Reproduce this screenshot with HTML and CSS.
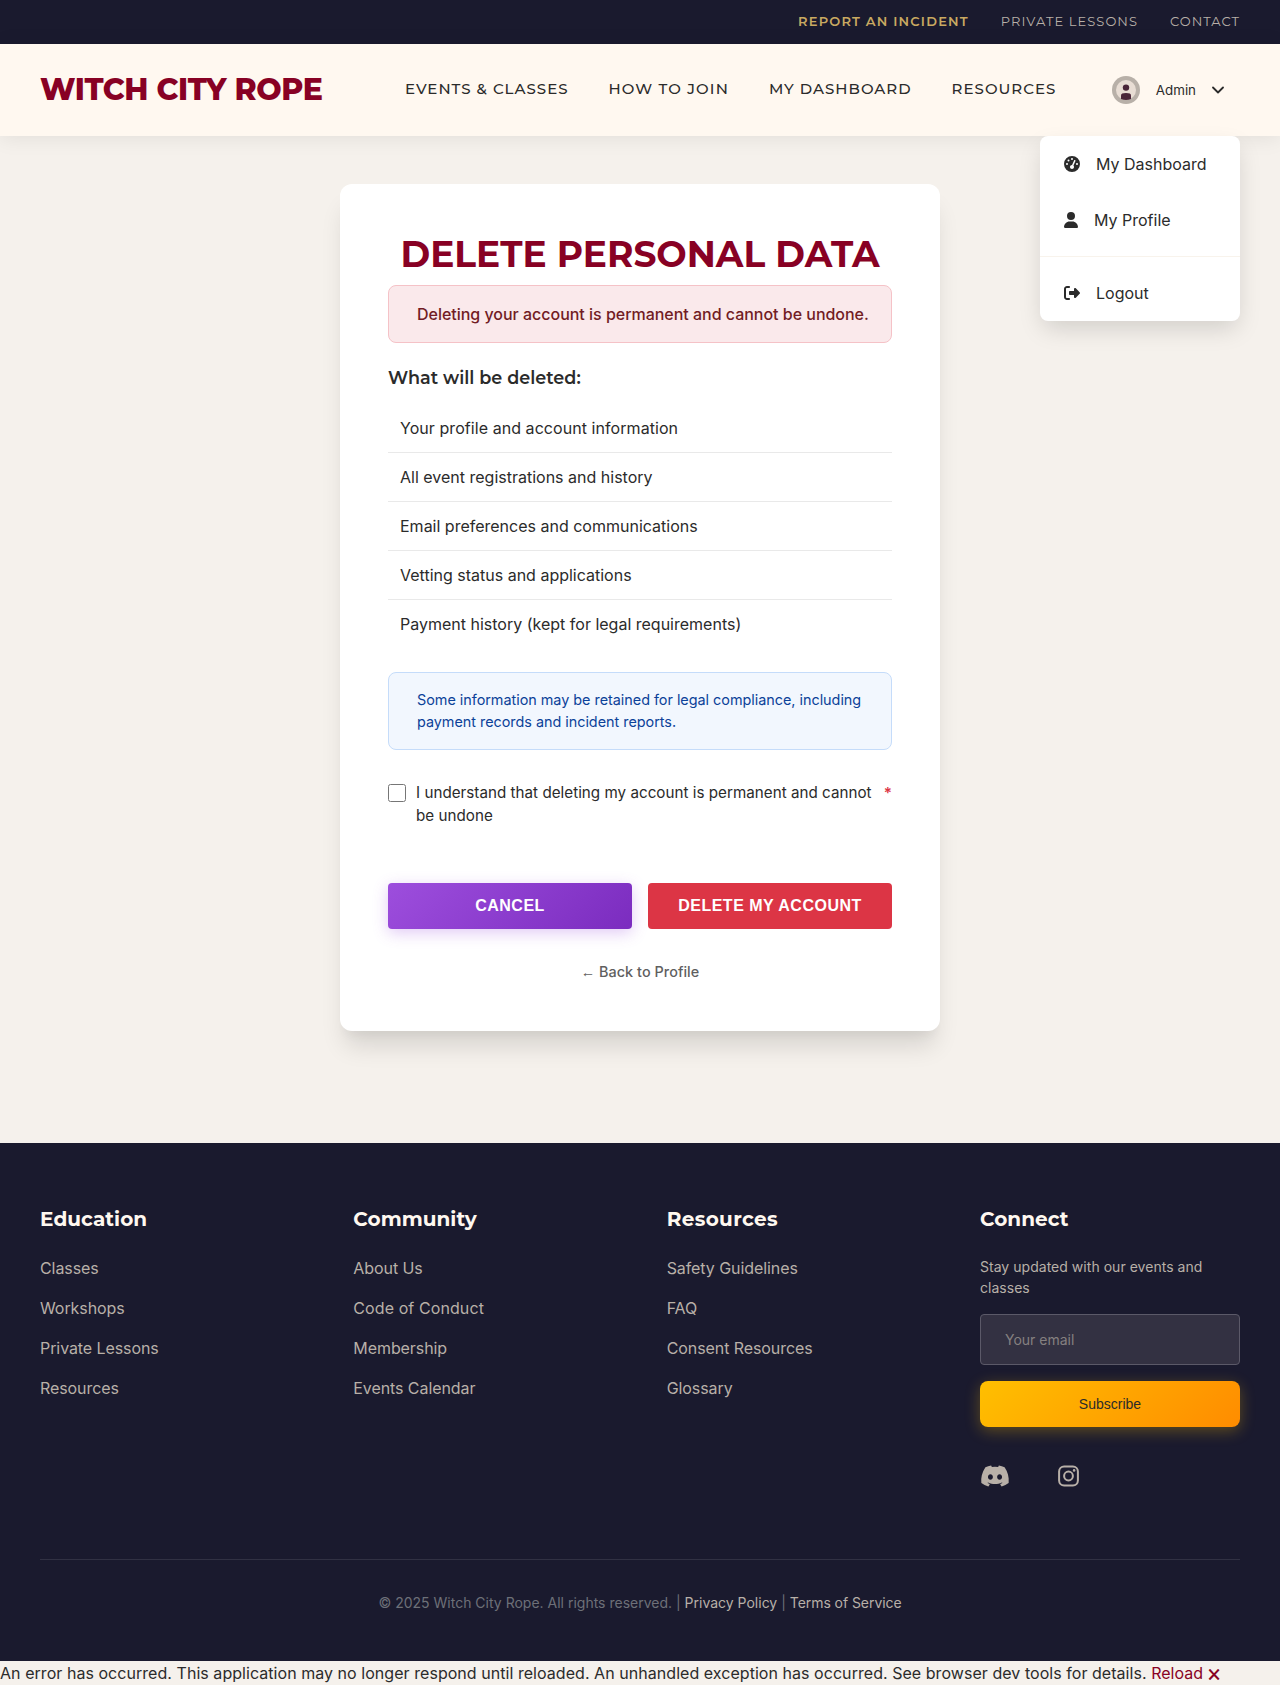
FILE: index.html
```html
<!DOCTYPE html>
<html lang="en">
<head>
<meta charset="utf-8">
<title>Delete Personal Data - Witch City Rope</title>
<link rel="stylesheet" href="styles.css">
</head>
<body>
<div class="topbar">
  <a class="incident" href="#">Report an Incident</a>
  <a class="lessons" href="#">Private Lessons</a>
  <a class="contact" href="#">Contact</a>
</div>
<header class="header">
  <a class="logo" href="#">WITCH CITY ROPE</a>
  <nav class="nav">
    <a href="#">Events &amp; Classes</a>
    <a class="join" href="#">How to Join</a>
    <a href="#">My Dashboard</a>
    <a href="#">Resources</a>
  </nav>
  <div class="user">
    <svg class="avatar" width="28" height="28" viewBox="0 0 28 28"><circle cx="14" cy="14" r="14" fill="#b8b0a8"/><circle cx="14" cy="14" r="10" fill="#e8ddd4"/><circle cx="14" cy="11.6" r="3.2" fill="#4a2639"/><path d="M9 23v-3.600q0-2.400 5-2.400t5 2.400V23q-5 2-10 0z" fill="#4a2639"/></svg>
    <span class="username">Admin</span>
    <svg width="14" height="14" viewBox="0 0 14 14" fill="none" stroke="#2b2b2b" stroke-width="1.800" stroke-linecap="round" stroke-linejoin="round"><path d="M1 4.500l5 5 5-5"/></svg>
  </div>
  <div class="menu">
    <a class="item" href="#"><svg width="16" height="16" viewBox="0 0 512 512" fill="#2b2b2b"><path d="M0 256a256 256 0 1 1 512 0A256 256 0 1 1 0 256zM288 96a32 32 0 1 0-64 0 32 32 0 1 0 64 0zM256 416c35.300 0 64-28.700 64-64 0-17.400-6.900-33.100-18.100-44.600L366 161.700c5.300-12.100-.2-26.300-12.300-31.600s-26.300.2-31.600 12.300L257.900 288H256c-35.300 0-64 28.700-64 64s28.700 64 64 64zM176 144a32 32 0 1 0-64 0 32 32 0 1 0 64 0zM96 288a32 32 0 1 0 0-64 32 32 0 1 0 0 64zm352-32a32 32 0 1 0-64 0 32 32 0 1 0 64 0z" fill-rule="evenodd"/></svg>My Dashboard</a>
    <a class="item" href="#"><svg width="14" height="16" viewBox="0 0 448 512" fill="#2b2b2b"><path d="M224 256A128 128 0 1 0 224 0a128 128 0 1 0 0 256zm-45.700 48C79.800 304 0 383.800 0 482.300 0 498.700 13.300 512 29.700 512h388.600c16.400 0 29.700-13.300 29.700-29.700C448 383.800 368.200 304 269.700 304h-91.400z"/></svg>My Profile</a>
    <a class="item logout" href="#"><svg width="16" height="16" viewBox="0 0 512 512" fill="#2b2b2b"><path d="M377.900 105.900L500.700 228.700c7.200 7.200 11.300 17.100 11.300 27.300s-4.100 20.100-11.300 27.300L377.900 406.100c-6.400 6.400-15 9.900-24 9.900-18.700 0-33.900-15.200-33.900-33.900V320H192c-17.700 0-32-14.300-32-32v-64c0-17.700 14.300-32 32-32h128v-62.100c0-18.700 15.200-33.900 33.900-33.900 9 0 17.600 3.600 24 9.900zM160 96H96c-17.700 0-32 14.300-32 32v256c0 17.700 14.300 32 32 32h64c17.700 0 32 14.300 32 32s-14.300 32-32 32H96c-53 0-96-43-96-96V128c0-53 43-96 96-96h64c17.700 0 32 14.300 32 32s-14.300 32-32 32z"/></svg>Logout</a>
  </div>
</header>
<main class="main">
  <section class="card">
    <h1>DELETE PERSONAL DATA</h1>
    <div class="alert">Deleting your account is permanent and cannot be undone.</div>
    <h2>What will be deleted:</h2>
    <ul class="list">
      <li>Your profile and account information</li>
      <li>All event registrations and history</li>
      <li>Email preferences and communications</li>
      <li>Vetting status and applications</li>
      <li>Payment history (kept for legal requirements)</li>
    </ul>
    <div class="info">Some information may be retained for legal compliance, including payment records and incident reports.</div>
    <label class="confirm"><input type="checkbox"><span class="confirm-text">I understand that deleting my account is permanent and cannot be undone</span><span class="required">*</span></label>
    <div class="actions">
      <button class="cancel">CANCEL</button>
      <button class="delete">DELETE MY ACCOUNT</button>
    </div>
    <a class="back" href="#"><span class="arrow">←</span> Back to Profile</a>
  </section>
</main>
<footer class="footer">
  <div class="columns">
    <div class="column"><h3>Education</h3><a href="#">Classes</a><a href="#">Workshops</a><a href="#">Private Lessons</a><a href="#">Resources</a></div>
    <div class="column"><h3>Community</h3><a href="#">About Us</a><a class="conduct" href="#">Code of Conduct</a><a href="#">Membership</a><a href="#">Events Calendar</a></div>
    <div class="column"><h3 class="wide">Resources</h3><a href="#">Safety Guidelines</a><a href="#">FAQ</a><a href="#">Consent Resources</a><a href="#">Glossary</a></div>
    <div class="column">
      <h3>Connect</h3>
      <p>Stay updated with our events and classes</p>
      <input class="email" type="email" placeholder="Your email">
      <button class="subscribe">Subscribe</button>
      <div class="social">
        <svg width="30" height="24" viewBox="0 0 640 512" fill="#b8b0a8"><path d="M524.500 69.800a1.500 1.500 0 0 0-.8-.7A485.100 485.100 0 0 0 404.100 32a1.800 1.800 0 0 0-1.900.9 337.500 337.500 0 0 0-14.900 30.600 447.800 447.800 0 0 0-134.400 0 309.500 309.500 0 0 0-15.100-30.600 1.900 1.900 0 0 0-1.900-.9A483.700 483.700 0 0 0 116.100 69.100a1.700 1.700 0 0 0-.8.7C39.100 183.700 18.200 294.700 28.400 404.400a2 2 0 0 0 .8 1.400A487.700 487.700 0 0 0 176 479.900a1.900 1.900 0 0 0 2.100-.7A348.200 348.200 0 0 0 208.100 430.400a1.900 1.900 0 0 0-1-2.600 321.200 321.200 0 0 1-45.900-21.900 1.900 1.900 0 0 1-.2-3.100c3.100-2.300 6.200-4.700 9.100-7.100a1.800 1.800 0 0 1 1.900-.3c96.200 43.900 200.400 43.900 295.500 0a1.800 1.800 0 0 1 1.900.2c2.900 2.400 6 4.900 9.100 7.200a1.900 1.900 0 0 1-.2 3.100 301.400 301.400 0 0 1-45.900 21.800 1.900 1.900 0 0 0-1 2.600 391.100 391.100 0 0 0 30 48.800 1.900 1.900 0 0 0 2.100.7A486 486 0 0 0 610.700 405.700a1.900 1.900 0 0 0 .8-1.400C623.700 277.600 590.900 167.500 524.500 69.800zM222.500 337.600c-29 0-52.800-26.600-52.800-59.200S193.100 219.100 222.500 219.100c29.700 0 53.300 26.800 52.800 59.200C275.300 311 251.900 337.600 222.500 337.600zm195.400 0c-29 0-52.800-26.600-52.800-59.200s23.400-59.300 52.800-59.300c29.700 0 53.300 26.800 52.800 59.200 0 32.700-23.200 59.300-52.800 59.300z"/></svg>
        <svg width="21" height="24" viewBox="0 0 21 24"><rect x="1.100" y="2.600" width="18.800" height="18.800" rx="5" fill="none" stroke="#b8b0a8" stroke-width="2"/><circle cx="10.500" cy="12" r="4.400" fill="none" stroke="#b8b0a8" stroke-width="2"/><circle cx="16.100" cy="6.400" r="1.300" fill="#b8b0a8"/></svg>
      </div>
    </div>
  </div>
  <div class="legal">© 2025 Witch City Rope. All rights reserved. | <a href="#">Privacy Policy</a> | <a class="terms" href="#">Terms of Service</a></div>
</footer>
<div class="error">An error has occurred. This application may no longer respond until reloaded. An unhandled exception has occurred. See browser dev tools for details. <a href="#">Reload</a> <span class="dismiss">🗙</span></div>
</body>
</html>
```
FILE: styles.css
```css
* { box-sizing: border-box; }
body { margin: 0; background: #f5f1ec; color: #2b2b2b; font: 16px/24px Inter, "Noto Sans", sans-serif; height: 1685px; overflow: hidden; }
a { color: inherit; text-decoration: none; }
h1, h2, h3, p, ul { margin: 0; padding: 0; }
svg { flex: none; display: block; }

.topbar { height: 44px; padding: 0 40px 2px; background: #1a1a2e; display: flex; justify-content: flex-end; align-items: center; gap: 32px; font: 13px/20px Montserrat, Inter, sans-serif; letter-spacing: 1px; text-transform: uppercase; color: #b8b0a8; }
.incident { color: #c9a961; font-weight: 600; letter-spacing: 1.200px; }
.lessons { letter-spacing: 1.070px; }

.header { position: relative; z-index: 2; height: 92px; padding: 0 54px 0 40px; background: #fff8f0; box-shadow: 0 2px 20px rgba(0, 0, 0, .08); display: flex; align-items: center; }
.logo { color: #880124; font: 800 30px/36px Montserrat, Inter, sans-serif; letter-spacing: -.4px; white-space: nowrap; width: 365px; }
.nav { display: flex; gap: 40px; font: 500 15px/24px Montserrat, Inter, sans-serif; letter-spacing: 1px; text-transform: uppercase; white-space: nowrap; padding-bottom: 2px; }
.join { letter-spacing: 1.150px; }
.user { display: flex; align-items: center; gap: 16px; margin-left: auto; }
.username { font-size: 13.333px; }

.menu { position: absolute; top: 92px; right: 40px; width: 200px; height: 185px; background: #fff; border-radius: 8px; box-shadow: 0 10px 25px -3px rgba(0, 0, 0, .15); }
.item { display: flex; align-items: center; gap: 16px; height: 56px; padding: 0 24px; }
.logout { height: 72px; border-top: 1px solid #f8f3ec; margin-top: 8px; }

.main { height: 1007px; padding-top: 48px; }
.card { width: 600px; height: 847px; margin: 0 auto; padding: 48px; background: #fff; border-radius: 12px; box-shadow: 0 20px 25px -5px rgba(0, 0, 0, .12), 0 10px 10px -5px rgba(0, 0, 0, .04); }
h1 { color: #880124; font: 700 36px/44px Montserrat, Inter, sans-serif; text-align: center; white-space: nowrap; margin-bottom: 9px; }
.alert { height: 58px; padding: 16px 28px; background: #fae9eb; border: 1px solid #f5c2c7; border-radius: 8px; color: #721c24; font-weight: 500; letter-spacing: -.02px; white-space: nowrap; }
h2 { margin: 23px 0 14px; font: 600 17.600px/24px Montserrat, Inter, sans-serif; }
.list { list-style: none; }
.list li { height: 49px; padding: 12px; border-bottom: 1px solid #e9e9e9; }
.list li:first-child { letter-spacing: .06px; }
.list li:last-child { border-bottom: 0; height: 48px; }
.info { margin-top: 24px; height: 78px; padding: 16px 24px 16px 28px; border: 1px solid #c5dcfa; border-radius: 8px; background: #f2f7fe; color: #0c4299; font-size: 14.400px; line-height: 22px; letter-spacing: -.02px; }
.confirm { display: flex; align-items: flex-start; margin-top: 31px; height: 70px; font-size: 15.200px; line-height: 23px; }
.confirm input { width: 18px; height: 18px; margin: 3px 10px 0 0; flex: none; }
.confirm-text { flex: 1; letter-spacing: .02px; }
.required { color: #dc3545; margin-left: 4px; font-weight: 600; }
.actions { display: grid; grid-template-columns: 1fr 1fr; gap: 16px; margin-top: 32px; }
.actions button { height: 46px; border: 0; border-radius: 4px; color: #fff; font: 600 16px/20px "Liberation Sans", Arial, sans-serif; letter-spacing: .5px; }
.cancel { background: linear-gradient(135deg, #9d4edd, #7b2cbf); box-shadow: 0 4px 15px rgba(157, 78, 221, .3); }
.delete { background: #dc3545; }
.back { display: block; margin-top: 32px; text-align: center; color: #5f5f5f; font-size: 14.400px; font-weight: 500; line-height: 22px; letter-spacing: .05px; }
.arrow { font-family: "Liberation Sans", Arial, sans-serif; }

.footer { height: 518px; padding: 64px 40px 0; background: #1a1a2e; color: #b8b0a8; }
.columns { height: 352px; display: grid; grid-template-columns: repeat(4, 260px); justify-content: space-between; }
.column { display: flex; flex-direction: column; align-items: flex-start; }
.column h3 { color: #fff8f0; font: 700 20px/24px Montserrat, Inter, sans-serif; letter-spacing: .05px; margin-bottom: 25px; }
.column .wide { letter-spacing: .35px; }
.column > a { margin-bottom: 16px; letter-spacing: -.08px; }
.column .conduct { letter-spacing: .09px; }
.column p { font-size: 14px; line-height: 21px; margin: 0 0 16px; letter-spacing: .03px; }
.email { width: 260px; height: 51px; padding: 0 24px; border: 1px solid #5b5968; border-radius: 4px; background: #333142; font: 14px Inter, sans-serif; }
.email::placeholder { color: #858080; }
.subscribe { width: 260px; height: 46px; margin-top: 16px; border: 0; border-radius: 8px; color: #2b2b2b; background: linear-gradient(135deg, #ffbf00, #ff8c00); box-shadow: 0 4px 15px rgba(255, 191, 0, .3); font: 14px "Liberation Sans", Arial, sans-serif; }
.social { display: flex; margin-top: 37px; gap: 48px; }
.legal { border-top: 1px solid #313143; padding-top: 32px; text-align: center; color: #6d7078; font-size: 14px; line-height: 22px; }
.legal a { color: #b8b0a8; }
.legal .terms { letter-spacing: -.06px; }
.error { height: 24px; white-space: nowrap; letter-spacing: .046px; }
.error a, .dismiss { color: #880124; }
```
